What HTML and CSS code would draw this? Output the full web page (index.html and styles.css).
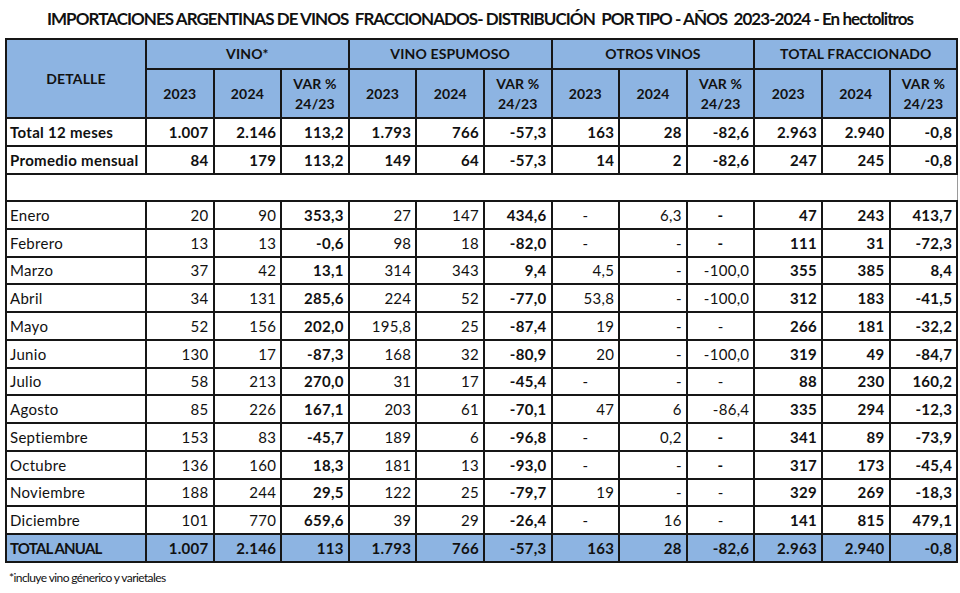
FILE: index.html
```html
<!DOCTYPE html>
<html lang="es">
<head>
<meta charset="utf-8">
<title>Importaciones argentinas de vinos fraccionados</title>
<link rel="stylesheet" href="styles.css">
</head>
<body>
<div class="page">
  <h1 class="title">IMPORTACIONES ARGENTINAS DE VINOS  FRACCIONADOS- DISTRIBUCIÓN  POR TIPO - AÑOS  2023-2024 - En hectolitros</h1>
  <table class="grid">
    <colgroup>
      <col class="c-det">
      <col class="c-n"><col class="c-n"><col class="c-n">
      <col class="c-n"><col class="c-n"><col class="c-n">
      <col class="c-n"><col class="c-n"><col class="c-n">
      <col class="c-n"><col class="c-n"><col class="c-n">
    </colgroup>
    <thead>
      <tr class="h1">
        <th rowspan="2" class="det">DETALLE</th>
        <th colspan="3">VINO*</th>
        <th colspan="3">VINO ESPUMOSO</th>
        <th colspan="3">OTROS VINOS</th>
        <th colspan="3">TOTAL FRACCIONADO</th>
      </tr>
      <tr class="h2">
        <th>2023</th><th>2024</th><th class="var">VAR %<br>24/23</th>
        <th>2023</th><th>2024</th><th class="var">VAR %<br>24/23</th>
        <th>2023</th><th>2024</th><th class="var">VAR %<br>24/23</th>
        <th>2023</th><th>2024</th><th class="var">VAR %<br>24/23</th>
      </tr>
    </thead>
    <tbody>
      <tr class="sum">
        <td class="lbl">Total 12  meses</td>
        <td>1.007</td><td>2.146</td><td>113,2</td>
        <td>1.793</td><td>766</td><td>-57,3</td>
        <td>163</td><td>28</td><td>-82,6</td>
        <td>2.963</td><td>2.940</td><td>-0,8</td>
      </tr>
      <tr class="sum">
        <td class="lbl">Promedio mensual</td>
        <td>84</td><td>179</td><td>113,2</td>
        <td>149</td><td>64</td><td>-57,3</td>
        <td>14</td><td>2</td><td>-82,6</td>
        <td>247</td><td>245</td><td>-0,8</td>
      </tr>
      <tr class="gap"><td colspan="13"></td></tr>
      <tr class="m">
        <td class="lbl">Enero</td>
        <td>20</td><td>90</td><td class="b">353,3</td>
        <td>27</td><td>147</td><td class="b">434,6</td>
        <td class="ctr">-</td><td>6,3</td><td class="ctr b">-</td>
        <td class="b">47</td><td class="b">243</td><td class="b">413,7</td>
      </tr>
      <tr class="m">
        <td class="lbl">Febrero</td>
        <td>13</td><td>13</td><td class="b">-0,6</td>
        <td>98</td><td>18</td><td class="b">-82,0</td>
        <td class="ctr">-</td><td>-</td><td class="ctr b">-</td>
        <td class="b">111</td><td class="b">31</td><td class="b">-72,3</td>
      </tr>
      <tr class="m">
        <td class="lbl">Marzo</td>
        <td>37</td><td>42</td><td class="b">13,1</td>
        <td>314</td><td>343</td><td class="b">9,4</td>
        <td>4,5</td><td>-</td><td>-100,0</td>
        <td class="b">355</td><td class="b">385</td><td class="b">8,4</td>
      </tr>
      <tr class="m">
        <td class="lbl">Abril</td>
        <td>34</td><td>131</td><td class="b">285,6</td>
        <td>224</td><td>52</td><td class="b">-77,0</td>
        <td>53,8</td><td>-</td><td>-100,0</td>
        <td class="b">312</td><td class="b">183</td><td class="b">-41,5</td>
      </tr>
      <tr class="m">
        <td class="lbl">Mayo</td>
        <td>52</td><td>156</td><td class="b">202,0</td>
        <td>195,8</td><td>25</td><td class="b">-87,4</td>
        <td>19</td><td>-</td><td class="ctr">-</td>
        <td class="b">266</td><td class="b">181</td><td class="b">-32,2</td>
      </tr>
      <tr class="m">
        <td class="lbl">Junio</td>
        <td>130</td><td>17</td><td class="b">-87,3</td>
        <td>168</td><td>32</td><td class="b">-80,9</td>
        <td>20</td><td>-</td><td>-100,0</td>
        <td class="b">319</td><td class="b">49</td><td class="b">-84,7</td>
      </tr>
      <tr class="m">
        <td class="lbl">Julio</td>
        <td>58</td><td>213</td><td class="b">270,0</td>
        <td>31</td><td>17</td><td class="b">-45,4</td>
        <td class="ctr">-</td><td>-</td><td class="ctr">-</td>
        <td class="b">88</td><td class="b">230</td><td class="b">160,2</td>
      </tr>
      <tr class="m">
        <td class="lbl">Agosto</td>
        <td>85</td><td>226</td><td class="b">167,1</td>
        <td>203</td><td>61</td><td class="b">-70,1</td>
        <td>47</td><td>6</td><td>-86,4</td>
        <td class="b">335</td><td class="b">294</td><td class="b">-12,3</td>
      </tr>
      <tr class="m">
        <td class="lbl">Septiembre</td>
        <td>153</td><td>83</td><td class="b">-45,7</td>
        <td>189</td><td>6</td><td class="b">-96,8</td>
        <td class="ctr">-</td><td>0,2</td><td class="ctr b">-</td>
        <td class="b">341</td><td class="b">89</td><td class="b">-73,9</td>
      </tr>
      <tr class="m">
        <td class="lbl">Octubre</td>
        <td>136</td><td>160</td><td class="b">18,3</td>
        <td>181</td><td>13</td><td class="b">-93,0</td>
        <td class="ctr">-</td><td>-</td><td class="ctr b">-</td>
        <td class="b">317</td><td class="b">173</td><td class="b">-45,4</td>
      </tr>
      <tr class="m">
        <td class="lbl">Noviembre</td>
        <td>188</td><td>244</td><td class="b">29,5</td>
        <td>122</td><td>25</td><td class="b">-79,7</td>
        <td>19</td><td>-</td><td class="ctr">-</td>
        <td class="b">329</td><td class="b">269</td><td class="b">-18,3</td>
      </tr>
      <tr class="m">
        <td class="lbl">Diciembre</td>
        <td>101</td><td>770</td><td class="b">659,6</td>
        <td>39</td><td>29</td><td class="b">-26,4</td>
        <td class="ctr">-</td><td>16</td><td class="ctr">-</td>
        <td class="b">141</td><td class="b">815</td><td class="b">479,1</td>
      </tr>
      <tr class="total">
        <td class="lbl">TOTAL ANUAL</td>
        <td>1.007</td><td>2.146</td><td>113</td>
        <td>1.793</td><td>766</td><td>-57,3</td>
        <td>163</td><td>28</td><td>-82,6</td>
        <td>2.963</td><td>2.940</td><td>-0,8</td>
      </tr>
    </tbody>
  </table>
  <p class="note">*incluye vino génerico  y varietales</p>
</div>
</body>
</html>
```

FILE: styles.css
```css
html, body {
  margin: 0;
  padding: 0;
  background: #ffffff;
}

body {
  font-family: Lato, "Liberation Sans", sans-serif;
  color: #111111;
}

.page {
  width: 960px;
  padding: 0 0 0 5px;
  box-sizing: border-box;
}

.title {
  margin: 0 0 0 -5px;
  height: 38px;
  line-height: 38px;
  font-size: 17px;
  font-weight: 700;
  letter-spacing: -0.95px;
  text-align: center;
  white-space: pre;
}

.grid {
  border-collapse: collapse;
  table-layout: fixed;
  width: 952px;
  font-size: 15px;
  letter-spacing: 0.3px;
}

.c-det { width: 140px; }
.c-n { width: 67.6px; }

.grid th,
.grid td {
  border: 2px solid #161616;
  padding: 0 4px;
  overflow: hidden;
  white-space: nowrap;
}

.grid th {
  background: #8db4e2;
  font-size: 14px;
  font-weight: 700;
  letter-spacing: 0.15px;
  text-align: center;
  vertical-align: middle;
  line-height: 20px;
}

.h1 { height: 30px; }
.h2 { height: 49px; }

.grid td {
  text-align: right;
  line-height: 18px;
}

.grid td.lbl {
  text-align: left;
  padding-left: 3px;
}

.grid td.ctr { text-align: center; }
.grid td.b { font-weight: 700; }

.sum { height: 28px; }
.sum td { font-weight: 700; }

.gap { height: 27px; }
.gap td {
  border-right-width: 1px;
  border-right-color: #9a9a9a;
}

.m { height: 27.75px; }

.total { height: 28px; }
.total td {
  background: #8db4e2;
  font-weight: 700;
}
.total td.lbl { letter-spacing: -0.8px; }

.note {
  margin: 7px 0 0 4px;
  font-size: 12px;
  letter-spacing: -0.6px;
  color: #111111;
}
```
